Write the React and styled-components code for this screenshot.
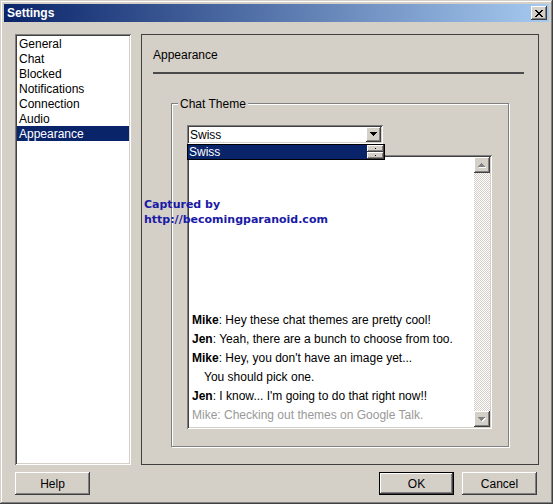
import React from "react";
import styled, { createGlobalStyle, css } from "styled-components";

const GlobalStyle = createGlobalStyle`
  html, body {
    margin: 0;
    padding: 0;
    background: #d4d0c8;
  }
  body {
    font-family: "Liberation Sans", Arial, sans-serif;
    font-size: 12px;
    color: #000;
  }
`;

const raised = css`
  background: #d4d0c8;
  box-shadow: inset -1px -1px 0 #404040, inset 1px 1px 0 #fff,
    inset -2px -2px 0 #808080, inset 2px 2px 0 #d4d0c8;
`;

const sunken = css`
  box-shadow: inset 1px 1px 0 #808080, inset -1px -1px 0 #fff,
    inset 2px 2px 0 #404040, inset -2px -2px 0 #d4d0c8;
`;

const Window = styled.div`
  position: relative;
  box-sizing: border-box;
  width: 553px;
  height: 504px;
  padding: 4px;
  background: #d4d0c8;
  box-shadow: inset -1px -1px 0 #404040, inset 1px 1px 0 #d4d0c8,
    inset -2px -2px 0 #808080, inset 2px 2px 0 #fff;
  display: flex;
  flex-direction: column;
`;

const TitleBar = styled.div`
  height: 18px;
  display: flex;
  align-items: center;
  justify-content: space-between;
  padding: 0 2px 0 3px;
  background: linear-gradient(to right, #0a246a, #a6caf0);
`;

const Title = styled.span`
  color: #fff;
  font-weight: bold;
  font-size: 12px;
`;

const CloseButton = styled.div`
  ${raised};
  width: 16px;
  height: 14px;
  display: flex;
  align-items: center;
  justify-content: center;
`;

const Body = styled.div`
  flex: 1;
  display: flex;
  flex-direction: column;
  padding: 12px 10px 0 11px;
`;

const Main = styled.div`
  display: flex;
  gap: 10px;
  height: 431px;
`;

const NavList = styled.ul`
  ${sunken};
  box-sizing: border-box;
  width: 116px;
  margin: 0;
  padding: 2px;
  list-style: none;
  background: #fff;
`;

const NavItem = styled.li`
  height: 14px;
  padding: 1px 0 0 2px;
  line-height: 15px;
  background: ${(p) => (p.$active ? "#0a246a" : "transparent")};
  color: ${(p) => (p.$active ? "#fff" : "#000")};
`;

const Panel = styled.div`
  flex: 1;
  box-sizing: border-box;
  border: 1px solid #404040;
  padding: 13px 14px 0 11px;
  display: flex;
  flex-direction: column;
`;

const PanelHeader = styled.div`
  line-height: 15px;
`;

const Separator = styled.div`
  height: 2px;
  margin-top: 9px;
  background: #4a4a4a;
`;

const Group = styled.div`
  position: relative;
  box-sizing: border-box;
  height: 344px;
  margin: 29px 15px 0 18px;
  padding: 21px 0 0 15px;
  border: 1px solid #808080;
  box-shadow: inset 1px 1px 0 #fff, 1px 1px 0 #fff;
`;

const GroupLabel = styled.span`
  position: absolute;
  top: -7px;
  left: 6px;
  padding: 0 2px;
  line-height: 15px;
  background: #d4d0c8;
`;

const Combo = styled.div`
  ${sunken};
  position: relative;
  box-sizing: border-box;
  width: 196px;
  height: 19px;
  padding: 2px;
  display: flex;
  background: #fff;
`;

const ComboText = styled.span`
  flex: 1;
  line-height: 16px;
  padding-left: 1px;
`;

const ArrowButton = styled.div`
  ${raised};
  width: ${(p) => p.$w || 15}px;
  height: ${(p) => p.$h || 15}px;
  display: flex;
  align-items: center;
  justify-content: center;
  flex-shrink: 0;
`;

const Popup = styled.div`
  position: absolute;
  top: 100%;
  left: 0;
  z-index: 2;
  box-sizing: border-box;
  width: 198px;
  height: 16px;
  border: 1px solid #000;
  background: #fff;
  display: flex;
`;

const PopupItem = styled.div`
  flex: 1;
  background: #0a246a;
  color: #fff;
  line-height: 15px;
  padding-left: 1px;
`;

const Spinner = styled.div`
  width: 17px;
  display: flex;
  flex-direction: column;
`;

const SpinButton = styled.div`
  ${raised};
  flex: 1;
  display: flex;
  align-items: center;
  justify-content: center;
  &::after {
    content: "";
    width: 1px;
    height: 1px;
    background: #000;
  }
`;

const ChatBox = styled.div`
  ${sunken};
  box-sizing: border-box;
  width: 305px;
  height: 274px;
  margin-top: 11px;
  padding: 2px;
  background: #fff;
  display: flex;
`;

const Messages = styled.div`
  flex: 1;
  display: flex;
  flex-direction: column;
  justify-content: flex-end;
  padding: 0 0 2px 3px;
`;

const Line = styled.div`
  line-height: 19px;
  white-space: nowrap;
  padding-left: ${(p) => (p.$indent ? 12 : 0)}px;
  color: ${(p) => (p.$muted ? "#999" : "#000")};
  b {
    font-weight: bold;
  }
`;

const ScrollBar = styled.div`
  width: 16px;
  display: flex;
  flex-direction: column;
  justify-content: space-between;
  background-color: #fff;
  background-image: conic-gradient(
    #d4d0c8 25%,
    #fff 0 50%,
    #d4d0c8 0 75%,
    #fff 0
  );
  background-size: 2px 2px;
`;

const Footer = styled.div`
  margin-top: 7px;
  padding-right: 2px;
  display: flex;
  justify-content: space-between;
`;

const ButtonGroup = styled.div`
  display: flex;
  gap: 8px;
`;

const Button = styled.button`
  ${raised};
  box-sizing: border-box;
  width: 75px;
  height: 23px;
  padding: 0;
  border: ${(p) => (p.$default ? "1px solid #000" : "none")};
  font-family: "Liberation Sans", Arial, sans-serif;
  font-size: 12px;
  color: #000;
`;

const Watermark = styled.div`
  position: absolute;
  left: 144px;
  top: 197px;
  z-index: 3;
  color: #1a1aa6;
  font-family: "DejaVu Sans", Verdana, sans-serif;
  font-weight: bold;
  font-size: 11px;
  line-height: 15px;
`;

const CloseIcon = () => (
  <svg width="8" height="7" viewBox="0 0 8 7" shapeRendering="crispEdges">
    <path d="M0 0h2v1h-2zM6 0h2v1h-2zM1 1h2v1h-2zM5 1h2v1h-2zM2 2h4v1h-4zM3 3h2v1h-2zM2 4h4v1h-4zM1 5h2v1h-2zM5 5h2v1h-2zM0 6h2v1h-2zM6 6h2v1h-2z" fill="#000" />
  </svg>
);

const DownTriangle = ({ color = "#000", shadow }) => (
  <svg width="8" height="5" viewBox="0 0 8 5" shapeRendering="crispEdges">
    {shadow && <path d="M1 1h7v1h-1v1h-1v1h-1v1h-1v-1h-1v-1h-1v-1h-1z" fill="#fff" />}
    <path d="M0 0h7v1h-1v1h-1v1h-1v1h-1v-1h-1v-1h-1v-1h-1z" fill={color} />
  </svg>
);

const UpTriangle = ({ color = "#808080" }) => (
  <svg width="8" height="5" viewBox="0 0 8 5" shapeRendering="crispEdges">
    <path d="M4 1h1v1h1v1h1v1h1v1h-7v-1h1v-1h1v-1h1z" fill="#fff" />
    <path d="M3 0h1v1h1v1h1v1h1v1h-7v-1h1v-1h1v-1h1z" fill={color} />
  </svg>
);

const navItems = [
  "General",
  "Chat",
  "Blocked",
  "Notifications",
  "Connection",
  "Audio",
  "Appearance",
];

export default function App() {
  return (
    <>
      <GlobalStyle />
      <Window>
        <TitleBar>
          <Title>Settings</Title>
          <CloseButton>
            <CloseIcon />
          </CloseButton>
        </TitleBar>
        <Body>
          <Main>
            <NavList>
              {navItems.map((item) => (
                <NavItem key={item} $active={item === "Appearance"}>
                  {item}
                </NavItem>
              ))}
            </NavList>
            <Panel>
              <PanelHeader>Appearance</PanelHeader>
              <Separator />
              <Group>
                <GroupLabel>Chat Theme</GroupLabel>
                <Combo>
                  <ComboText>Swiss</ComboText>
                  <ArrowButton>
                    <DownTriangle />
                  </ArrowButton>
                  <Popup>
                    <PopupItem>Swiss</PopupItem>
                    <Spinner>
                      <SpinButton />
                      <SpinButton />
                    </Spinner>
                  </Popup>
                </Combo>
                <ChatBox>
                  <Messages>
                    <Line>
                      <b>Mike</b>: Hey these chat themes are pretty cool!
                    </Line>
                    <Line>
                      <b>Jen</b>: Yeah, there are a bunch to choose from too.
                    </Line>
                    <Line>
                      <b>Mike</b>: Hey, you don't have an image yet...
                    </Line>
                    <Line $indent>You should pick one.</Line>
                    <Line>
                      <b>Jen</b>: I know... I'm going to do that right now!!
                    </Line>
                    <Line $muted>Mike: Checking out themes on Google Talk.</Line>
                  </Messages>
                  <ScrollBar>
                    <ArrowButton $w={16} $h={16}>
                      <UpTriangle />
                    </ArrowButton>
                    <ArrowButton $w={16} $h={16}>
                      <DownTriangle color="#808080" shadow />
                    </ArrowButton>
                  </ScrollBar>
                </ChatBox>
              </Group>
            </Panel>
          </Main>
          <Footer>
            <Button>Help</Button>
            <ButtonGroup>
              <Button $default>OK</Button>
              <Button>Cancel</Button>
            </ButtonGroup>
          </Footer>
        </Body>
        <Watermark>
          Captured by
          <br />
          http://becomingparanoid.com
        </Watermark>
      </Window>
    </>
  );
}
